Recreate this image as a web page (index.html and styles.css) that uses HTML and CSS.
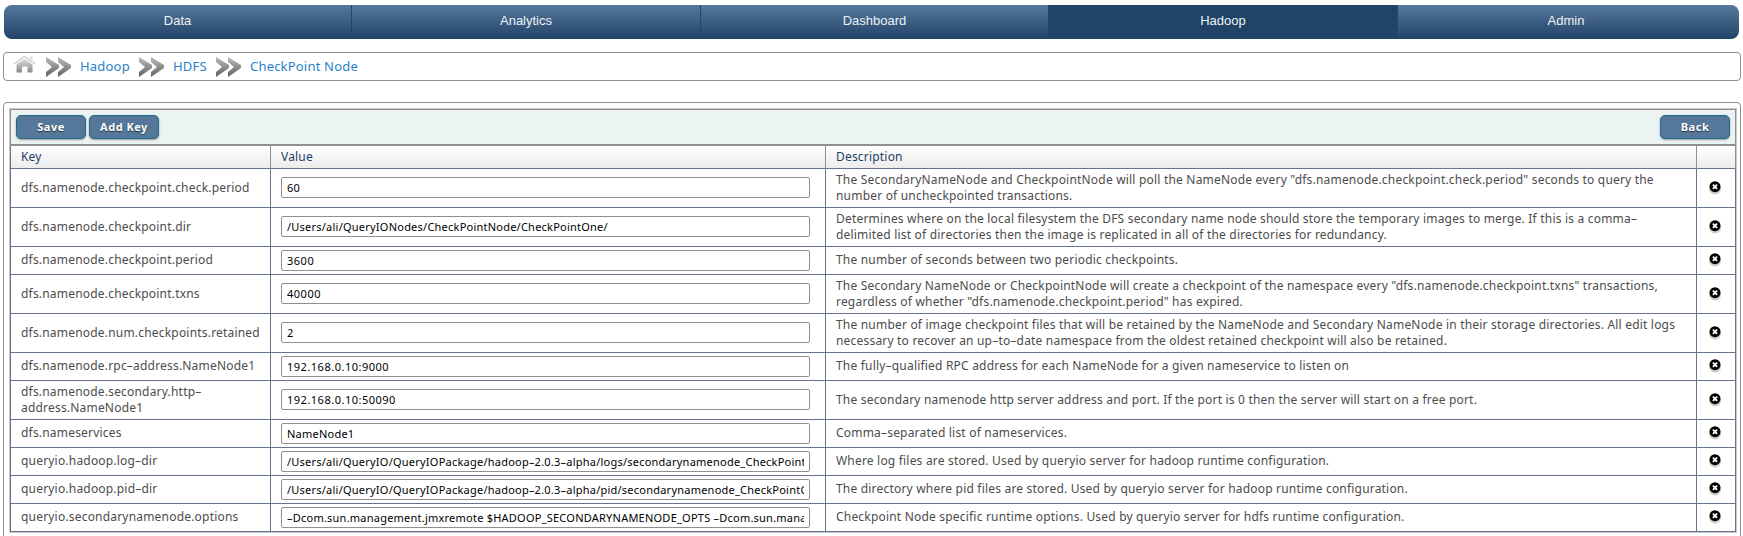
FILE: index.html
```html
<!DOCTYPE html>
<html lang="en">
<head>
<meta charset="utf-8">
<title>CheckPoint Node</title>
<link rel="stylesheet" href="styles.css">
</head>
<body>
<svg width="0" height="0" class="defs">
  <defs>
    <linearGradient id="grey" x1="0" y1="0" x2="0" y2="1"><stop offset="0" stop-color="#bdbdbd"/><stop offset="1" stop-color="#606060"/></linearGradient>
    <linearGradient id="homegrey" x1="0" y1="0" x2="0" y2="1"><stop offset="0" stop-color="#dcdcdc"/><stop offset="1" stop-color="#8a8a8a"/></linearGradient>
    <symbol id="chev" viewBox="0 0 25 20"><path fill="url(#grey)" d="M0 0L13 8V11L0 20V15L6 10L0 5ZM12 0L25 8V11L12 20V15L18 10L12 5Z"/></symbol>
    <symbol id="del" viewBox="0 0 14 15"><ellipse cx="7" cy="8.4" rx="6" ry="6" fill="#aaa" opacity=".6"/><circle cx="7" cy="6.7" r="5.5" fill="#000"/><path d="M4.9 4.6L9.1 8.8M9.1 4.6L4.9 8.8" stroke="#fff" stroke-width="1.9"/></symbol>
  </defs>
</svg>
<nav class="nav"><a>Data</a><a>Analytics</a><a>Dashboard</a><a class="active">Hadoop</a><a>Admin</a></nav>
<div class="crumbs">
  <svg class="home" viewBox="0 0 24 19"><path d="M1 9L11.5 1.5L22 9" fill="none" stroke="#d5d5d5" stroke-width="1.6"/><path d="M17 1.5h2.5v4L17 3.8z" fill="#ddd"/><path fill="url(#homegrey)" d="M3.5 9.5L11.5 3.8L19.5 9.5V17.5H14.5V11.5H9V17.5H3.5Z"/></svg>
  <svg class="chev"><use href="#chev"/></svg><a class="c1">Hadoop</a>
  <svg class="chev"><use href="#chev"/></svg><a class="c2">HDFS</a>
  <svg class="chev"><use href="#chev"/></svg><a class="c3">CheckPoint Node</a>
</div>
<main class="panel">
<div class="frame">
  <div class="toolbar"><button>Save</button><button>Add Key</button><button class="back">Back</button></div>
  <table>
    <colgroup><col class="k"><col class="v"><col class="d"><col class="x"></colgroup>
    <thead><tr><th>Key</th><th>Value</th><th>Description</th><th></th></tr></thead>
    <tbody>
    <tr class="tall"><td>dfs.namenode.checkpoint.check.period</td><td><input value="60"></td><td>The SecondaryNameNode and CheckpointNode will poll the NameNode every "dfs.namenode.checkpoint.check.period" seconds to query the<br>number of uncheckpointed transactions.</td><td><svg class="del"><use href="#del"/></svg></td></tr>
    <tr class="tall"><td>dfs.namenode.checkpoint.dir</td><td><input value="/Users/ali/QueryIONodes/CheckPointNode/CheckPointOne/"></td><td>Determines where on the local filesystem the DFS secondary name node should store the temporary images to merge. If this is a comma–<br>delimited list of directories then the image is replicated in all of the directories for redundancy.</td><td><svg class="del"><use href="#del"/></svg></td></tr>
    <tr><td>dfs.namenode.checkpoint.period</td><td><input class="num" value="3600"></td><td>The number of seconds between two periodic checkpoints.</td><td><svg class="del"><use href="#del"/></svg></td></tr>
    <tr class="tall"><td>dfs.namenode.checkpoint.txns</td><td><input class="num" value="40000"></td><td>The Secondary NameNode or CheckpointNode will create a checkpoint of the namespace every "dfs.namenode.checkpoint.txns" transactions,<br>regardless of whether "dfs.namenode.checkpoint.period" has expired.</td><td><svg class="del"><use href="#del"/></svg></td></tr>
    <tr class="tall"><td>dfs.namenode.num.checkpoints.retained</td><td><input value="2"></td><td>The number of image checkpoint files that will be retained by the NameNode and Secondary NameNode in their storage directories. All edit logs<br>necessary to recover an up–to–date namespace from the oldest retained checkpoint will also be retained.</td><td><svg class="del"><use href="#del"/></svg></td></tr>
    <tr><td>dfs.namenode.rpc–address.NameNode1</td><td><input class="num" value="192.168.0.10:9000"></td><td>The fully–qualified RPC address for each NameNode for a given nameservice to listen on</td><td><svg class="del"><use href="#del"/></svg></td></tr>
    <tr class="tall"><td>dfs.namenode.secondary.http–<br>address.NameNode1</td><td><input class="num" value="192.168.0.10:50090"></td><td>The secondary namenode http server address and port. If the port is 0 then the server will start on a free port.</td><td><svg class="del"><use href="#del"/></svg></td></tr>
    <tr><td>dfs.nameservices</td><td><input value="NameNode1"></td><td>Comma–separated list of nameservices.</td><td><svg class="del"><use href="#del"/></svg></td></tr>
    <tr><td>queryio.hadoop.log–dir</td><td><input value="/Users/ali/QueryIO/QueryIOPackage/hadoop–2.0.3–alpha/logs/secondarynamenode_CheckPointOne"></td><td>Where log files are stored. Used by queryio server for hadoop runtime configuration.</td><td><svg class="del"><use href="#del"/></svg></td></tr>
    <tr><td>queryio.hadoop.pid–dir</td><td><input value="/Users/ali/QueryIO/QueryIOPackage/hadoop–2.0.3–alpha/pid/secondarynamenode_CheckPointOne"></td><td>The directory where pid files are stored. Used by queryio server for hadoop runtime configuration.</td><td><svg class="del"><use href="#del"/></svg></td></tr>
    <tr><td>queryio.secondarynamenode.options</td><td><input value="–Dcom.sun.management.jmxremote $HADOOP_SECONDARYNAMENODE_OPTS –Dcom.sun.management"></td><td>Checkpoint Node specific runtime options. Used by queryio server for hdfs runtime configuration.</td><td><svg class="del"><use href="#del"/></svg></td></tr>
    </tbody>
  </table>
</div>
</main>
</body>
</html>
```
FILE: styles.css
```css
* { box-sizing: border-box; }
html { overflow: hidden; }
body { margin: 0; padding: 5px 2px 0 3px; height: 536px; overflow: hidden; background: #fff; color: #4c4c4c; font: 12px/16px "Lucida Grande", "Noto Sans", sans-serif; letter-spacing: .195px; display: flex; flex-direction: column; }
.defs { display: block; height: 0; flex: none; }
.nav { display: grid; grid-template-columns: 348px 349px 348px 349px 341px; width: 1735px; height: 34px; margin-left: 1px; border-radius: 8px; overflow: hidden; flex: none; background: linear-gradient(#55789c, #214367); color: #eef2f6; font: 13px/31px "Liberation Sans", sans-serif; letter-spacing: 0; text-align: center; }
.nav a { border-right: 1px solid #24466b; }
.nav a:last-child { border: 0; padding-right: 5px; }
.nav .active { background: #214367; }
.crumbs { display: flex; align-items: center; height: 29px; margin-top: 13px; border: 1px solid #8f8f8f; border-radius: 4px; padding-left: 9px; flex: none; font-size: 13px; color: #2a7fcb; }
.home { width: 24px; height: 19px; margin: -4px 9px 0 0; }
.chev { width: 25px; height: 20px; margin: 1px 9px 0 0; }
.crumbs a { margin-right: 10px; padding-bottom: 2px; white-space: nowrap; }
.c1 { width: 49px; } .c2 { width: 33px; }
.panel { flex: none; height: 450px; margin-top: 21px; border: 1px solid #8f8f8f; border-radius: 4px; padding: 5px; }
.frame { border: 1px solid #c9c9c9; width: 1728px; }
.toolbar { display: flex; gap: 3px; height: 37px; padding: 5px; border: 1px solid #8f8f8f; border-bottom: 2px solid #8f8f8f; background: #ecf3f3; }
button { width: 70px; height: 24px; padding: 0; border: 1px solid #1f6c8a; border-radius: 5px; background: #557799; color: #fff; font: bold 11px/20px "Lucida Grande", "Noto Sans", sans-serif; letter-spacing: .5px; text-shadow: 0 1px 1px #234; box-shadow: 0 1px 2px #999; }
.back { margin-left: auto; }
table { width: 1726px; table-layout: fixed; border-collapse: separate; border-spacing: 0; border-left: 1px solid #66738e; }
.k { width: 260px; } .v { width: 555px; } .d { width: 871px; } .x { width: 39px; }
th, td { padding: 0 0 0 10px; text-align: left; border-right: 1px solid #66738e; border-bottom: 1px solid #66738e; white-space: nowrap; }
th { height: 23px; background: linear-gradient(#fff, #ececec); border-right-color: #8f8f8f; color: #1c3f66; font-weight: normal; }
td { height: 28px; padding-bottom: 1px; }
.tall td { height: 39px; }
td:nth-child(2) { padding-bottom: 0; }
.tall td:nth-child(2) { padding-bottom: 1px; }
td:last-child { padding: 0 0 2px 11px; }
input { display: block; width: 529px; height: 21px; padding: 0 5px; border: 1px solid #8f8f8f; border-radius: 2px; color: #000; background: #fff; font: 11px "Lucida Grande", "Noto Sans", sans-serif; letter-spacing: .23px; }
.num { letter-spacing: .5px; }
.del { display: block; width: 14px; height: 15px; }
```
